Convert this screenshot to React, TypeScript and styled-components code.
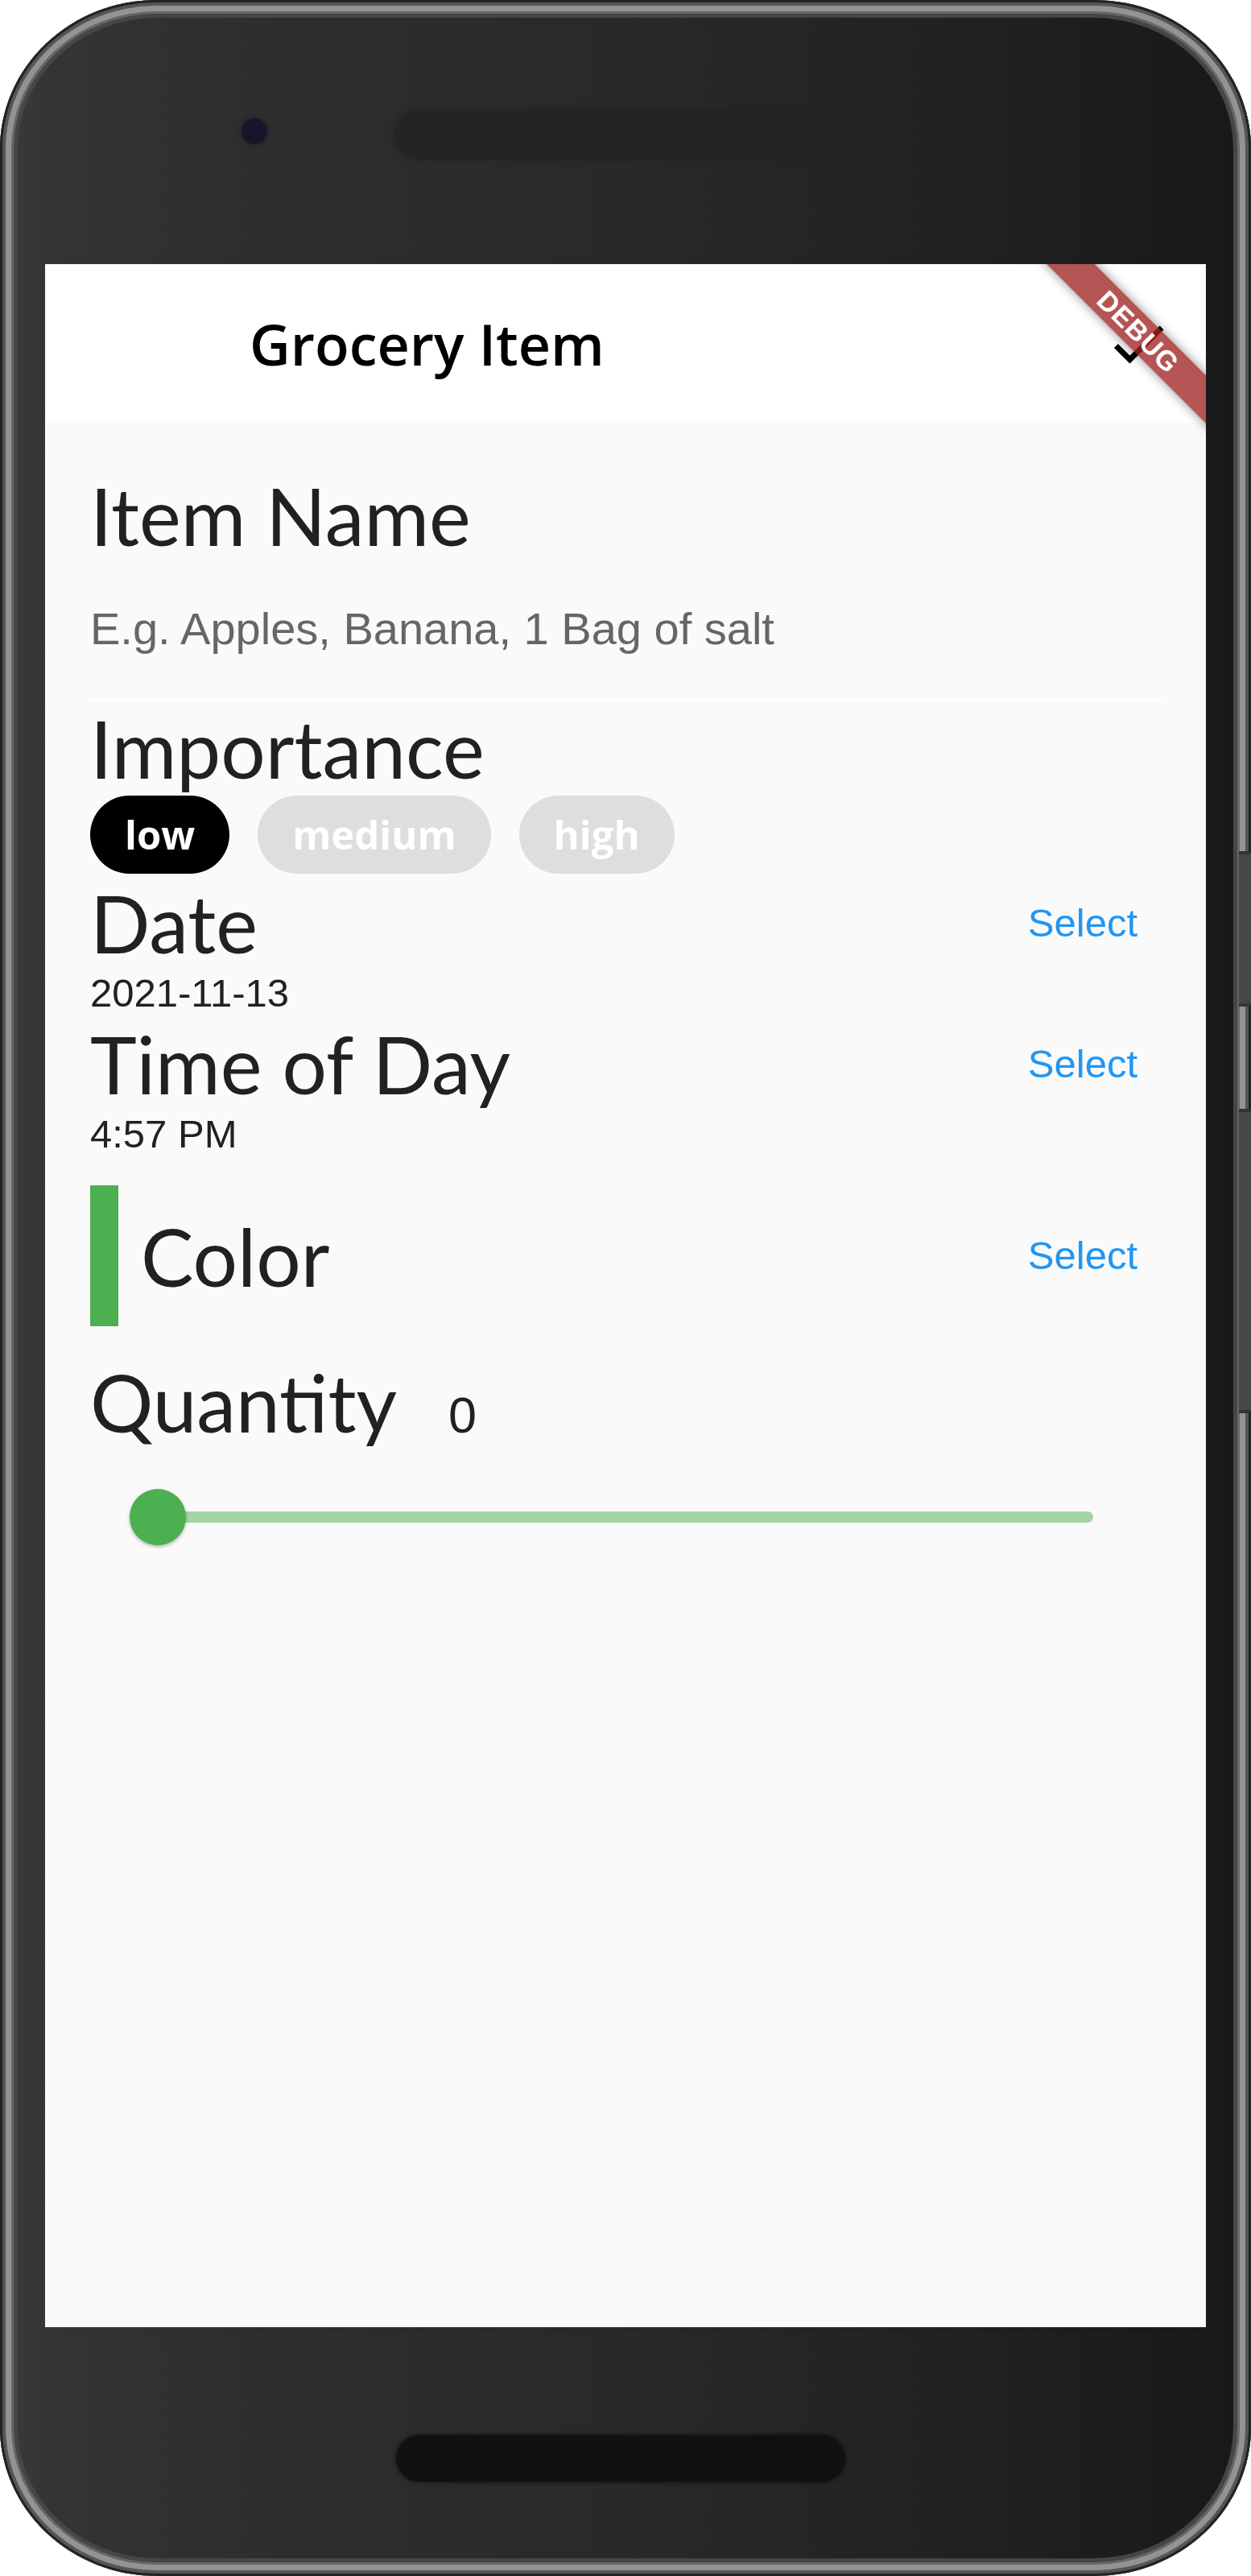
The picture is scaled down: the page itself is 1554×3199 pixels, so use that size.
import React from 'react';
import styled, { createGlobalStyle } from 'styled-components';

const GlobalStyle = createGlobalStyle`
  html, body { margin: 0; padding: 0; background: #ffffff; }
  body { font-family: "Liberation Sans", Arial, sans-serif; overflow: hidden; }
  * { box-sizing: border-box; }
`;

const Phone = styled.div`
  position: relative;
  width: 1554px;
  height: 3199px;
  border-radius: 195px / 185px;
  background: linear-gradient(90deg, #3c3c3c 0%, #343434 4%, #2e2e2e 20%, #292929 50%, #212121 78%, #181818 100%);
  box-shadow:
    inset 0 0 0 3px #232323,
    inset 0 0 0 7px #565656,
    inset 0 0 0 14px #939393,
    inset 0 0 0 17px #666666,
    inset 0 0 0 22px #464646;
  display: flex;
  flex-direction: column;
  padding: 0 56px;
`;

const TopBezel = styled.div`
  height: 328px;
  flex: none;
  display: flex;
  align-items: center;
  padding-left: 244px;
`;

const Camera = styled.div`
  width: 32px;
  height: 32px;
  border-radius: 50%;
  background: #16152c;
  box-shadow: 0 0 6px rgba(16, 16, 36, 0.6);
  margin-top: -2px;
`;

const TopSpeaker = styled.div`
  width: 560px;
  height: 58px;
  margin-left: 160px;
  margin-top: 5px;
  border-radius: 29px;
  background: #242424;
  box-shadow: 0 0 6px 2px rgba(34, 34, 34, 0.9);
`;

const SideButton = styled.div<{ $top: number; $height: number }>`
  position: absolute;
  right: 0;
  top: ${(p) => p.$top}px;
  height: ${(p) => p.$height}px;
  width: 15px;
  background: #474747;
  border-top: 4px solid #333;
  border-bottom: 4px solid #333;
`;

const Screen = styled.div`
  flex: none;
  height: 2562px;
  background: #fafafa;
  position: relative;
  overflow: hidden;
  display: flex;
  flex-direction: column;
`;

const BottomBezel = styled.div`
  flex: 1;
  padding-top: 134px;
  padding-left: 436px;
`;

const BottomSpeaker = styled.div`
  width: 558px;
  height: 58px;
  border-radius: 29px;
  background: #111111;
  box-shadow: 0 0 4px 1px rgba(17, 17, 17, 0.8);
`;

const AppBar = styled.header`
  flex: none;
  height: 197px;
  background: #ffffff;
  display: flex;
  align-items: center;
  padding-left: 254px;
`;

const Title = styled.h1`
  margin: 0;
  flex: 1;
  font-family: "Open Sans", sans-serif;
  font-weight: 600;
  font-size: 70px;
  line-height: 1;
  color: #000000;
`;

const ActionButton = styled.div`
  width: 168px;
  height: 197px;
  display: flex;
  align-items: center;
  justify-content: center;
`;

const DebugBanner = styled.div`
  position: absolute;
  top: 63px;
  right: -66px;
  width: 300px;
  height: 42px;
  transform: rotate(45deg);
  background: rgba(160, 36, 36, 0.78);
  box-shadow: 0 0 14px rgba(0, 0, 0, 0.45);
  color: #ffffff;
  font-family: "Liberation Sans", Arial, sans-serif;
  font-weight: 700;
  font-size: 34px;
  letter-spacing: 1px;
  display: flex;
  align-items: center;
  justify-content: center;
`;

const Content = styled.main`
  padding: 56px;
  display: flex;
  flex-direction: column;
`;

const SectionTitle = styled.h2`
  margin: 0;
  font-family: Lato, "Open Sans", sans-serif;
  font-weight: 400;
  font-size: 98px;
  line-height: 118px;
  color: #212121;
  white-space: nowrap;
`;

const NameInput = styled.div`
  padding: 50px 0 54px;
  border-bottom: 3px solid #ffffff;
  font-family: "Liberation Sans", Arial, sans-serif;
  font-size: 56px;
  line-height: 64px;
  color: #666666;
`;

const ChipRow = styled.div`
  display: flex;
  gap: 35px;
  margin-bottom: 2px;
`;

const Chip = styled.span<{ $selected: boolean }>`
  height: 97px;
  padding: 0 43px;
  border-radius: 49px;
  background: ${(p) => (p.$selected ? '#000000' : '#dedede')};
  color: #ffffff;
  font-family: "Open Sans", sans-serif;
  font-weight: 700;
  font-size: 49px;
  line-height: 97px;
  display: inline-flex;
  align-items: center;
`;

const FieldRow = styled.div`
  display: flex;
  align-items: center;
  justify-content: space-between;
`;

const SelectButton = styled.button`
  background: none;
  border: 0;
  padding: 0;
  margin-right: 29px;
  font-family: "Liberation Sans", Arial, sans-serif;
  font-size: 49px;
  line-height: 57px;
  color: #2196f3;
  cursor: pointer;
`;

const ValueText = styled.div`
  font-family: "Liberation Sans", Arial, sans-serif;
  font-size: 49px;
  line-height: 57px;
  color: #212121;
`;

const ColorRow = styled(FieldRow)`
  height: 175px;
  margin: 35px 0;
`;

const ColorLabel = styled.div`
  display: flex;
  align-items: center;
  gap: 28px;
`;

const Swatch = styled.div<{ $color: string }>`
  width: 35px;
  height: 175px;
  background: ${(p) => p.$color};
`;

const QuantityRow = styled.div`
  display: flex;
  align-items: baseline;
  gap: 64px;
`;

const QuantityValue = styled.span`
  font-family: "Liberation Sans", Arial, sans-serif;
  font-size: 63px;
  color: #212121;
`;

const Slider = styled.div`
  height: 168px;
  padding: 0 84px;
  display: flex;
  align-items: center;
`;

const Track = styled.div<{ $color: string }>`
  position: relative;
  flex: 1;
  height: 14px;
  border-radius: 7px;
  background: ${(p) => p.$color};
`;

const Thumb = styled.div<{ $color: string }>`
  position: absolute;
  left: -35px;
  top: 50%;
  width: 70px;
  height: 70px;
  margin-top: -35px;
  border-radius: 50%;
  background: ${(p) => p.$color};
  box-shadow: 0 2px 4px rgba(0, 0, 0, 0.28);
`;

const CheckIcon = () => (
  <svg width="84" height="84" viewBox="0 0 24 24" aria-hidden="true">
    <path d="M9 16.17L4.83 12l-1.42 1.41L9 19 21 7l-1.41-1.41z" fill="#000000" />
  </svg>
);

const importance = ['low', 'medium', 'high'];

export default function App() {
  const green = '#4caf50';
  return (
    <>
      <GlobalStyle />
      <Phone>
        <TopBezel>
          <Camera />
          <TopSpeaker />
        </TopBezel>
        <Screen>
          <AppBar>
            <Title>Grocery Item</Title>
            <ActionButton>
              <CheckIcon />
            </ActionButton>
          </AppBar>
          <Content>
            <SectionTitle>Item Name</SectionTitle>
            <NameInput>E.g. Apples, Banana, 1 Bag of salt</NameInput>
            <SectionTitle>Importance</SectionTitle>
            <ChipRow>
              {importance.map((label) => (
                <Chip key={label} $selected={label === 'low'}>
                  {label}
                </Chip>
              ))}
            </ChipRow>
            <FieldRow>
              <SectionTitle>Date</SectionTitle>
              <SelectButton>Select</SelectButton>
            </FieldRow>
            <ValueText>2021-11-13</ValueText>
            <FieldRow>
              <SectionTitle>Time of Day</SectionTitle>
              <SelectButton>Select</SelectButton>
            </FieldRow>
            <ValueText>4:57 PM</ValueText>
            <ColorRow>
              <ColorLabel>
                <Swatch $color={green} />
                <SectionTitle>Color</SectionTitle>
              </ColorLabel>
              <SelectButton>Select</SelectButton>
            </ColorRow>
            <QuantityRow>
              <SectionTitle>Quantity</SectionTitle>
              <QuantityValue>0</QuantityValue>
            </QuantityRow>
            <Slider>
              <Track $color="#a3d5a5">
                <Thumb $color={green} />
              </Track>
            </Slider>
          </Content>
          <DebugBanner>DEBUG</DebugBanner>
        </Screen>
        <BottomBezel>
          <BottomSpeaker />
        </BottomBezel>
        <SideButton $top={1057} $height={193} />
        <SideButton $top={1377} $height={378} />
      </Phone>
    </>
  );
}
